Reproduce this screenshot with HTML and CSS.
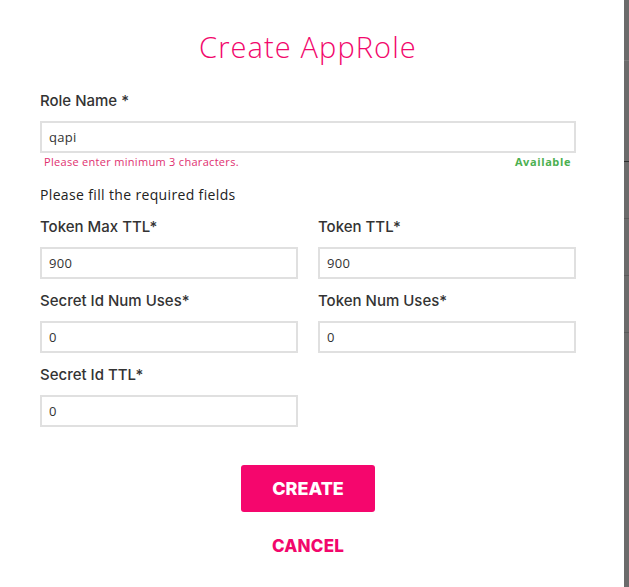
FILE: index.html
```html
<!DOCTYPE html>
<html lang="en">
<head>
<meta charset="utf-8">
<title>Create AppRole</title>
<link rel="stylesheet" href="styles.css">
</head>
<body>
<div class="screen">
  <div class="modal">
    <h1 class="title">Create AppRole</h1>
    <label class="label label-role">Role Name *</label>
    <div class="input"><span class="value">qapi</span></div>
    <div class="hint-row">
      <span class="error">Please enter minimum 3 characters.</span>
      <span class="available">Available</span>
    </div>
    <p class="note">Please fill the required fields</p>
    <div class="grid">
      <div class="field">
        <label class="label">Token Max TTL*</label>
        <div class="input"><span class="value">900</span></div>
      </div>
      <div class="field">
        <label class="label">Token TTL*</label>
        <div class="input"><span class="value">900</span></div>
      </div>
      <div class="field">
        <label class="label">Secret Id Num Uses*</label>
        <div class="input"><span class="value">0</span></div>
      </div>
      <div class="field">
        <label class="label">Token Num Uses*</label>
        <div class="input"><span class="value">0</span></div>
      </div>
      <div class="field">
        <label class="label">Secret Id TTL*</label>
        <div class="input"><span class="value">0</span></div>
      </div>
    </div>
    <div class="actions">
      <button class="btn-create">CREATE</button>
      <button class="btn-cancel">CANCEL</button>
    </div>
  </div>
  <div class="backdrop">
    <div class="bd-seg s1"></div>
    <div class="bd-seg s2"></div>
    <div class="bd-seg s3"></div>
    <div class="bd-seg s4"></div>
    <div class="bd-seg s5"></div>
    <div class="bd-seg s6"></div>
  </div>
</div>
</body>
</html>
```
FILE: styles.css
```css
html, body {
  margin: 0;
  padding: 0;
  background: #ffffff;
}
body {
  font-family: "Open Sans", "Noto Sans", sans-serif;
  color: #2b2b2b;
}
.screen {
  display: flex;
  width: 629px;
  height: 587px;
  overflow: hidden;
}
.modal {
  width: 624px;
  flex: none;
  box-sizing: border-box;
  padding: 30px 48px 0 40px;
  background: #fff;
  display: flex;
  flex-direction: column;
}
.title {
  margin: 0;
  font-size: 29px;
  line-height: 34px;
  font-weight: 300;
  letter-spacing: 1.1px;
  color: #f2076c;
  text-align: center;
}
.label {
  display: block;
  font-family: Inter, "Open Sans", sans-serif;
  font-size: 15px;
  line-height: 20px;
  padding-top: 1px;
  font-weight: 500;
  letter-spacing: 0;
  color: #333;
}
.label-role {
  margin-top: 26px;
}
.input {
  margin-top: 10px;
  height: 32px;
  box-sizing: border-box;
  border: 2px solid #e0e0e0;
  padding-left: 7px;
  display: flex;
  align-items: center;
  font-size: 13px;
  letter-spacing: 0.3px;
  color: #333;
}
.hint-row {
  margin-top: 2px;
  display: flex;
  justify-content: space-between;
  line-height: 14px;
  font-size: 11px;
  padding: 0 5px 0 4px;
}
.error {
  color: #e0306f;
  letter-spacing: 0.3px;
}
.available {
  color: #4cb050;
  font-weight: 700;
  letter-spacing: 0.6px;
}
.note {
  margin: 16px 0 0;
  font-size: 14px;
  line-height: 20px;
  letter-spacing: 0.35px;
  color: #222;
}
.grid {
  display: grid;
  grid-template-columns: 1fr 1fr;
  column-gap: 20px;
  row-gap: 11px;
  margin-top: 11px;
}
.actions {
  display: flex;
  flex-direction: column;
  align-items: center;
  margin-top: 38px;
}
.btn-create {
  width: 134px;
  height: 47px;
  border: none;
  border-radius: 3px;
  background: #f5066d;
  color: #fff;
  font-family: Inter, "Open Sans", sans-serif;
  font-size: 18px;
  font-weight: 800;
  letter-spacing: 0;
  padding: 0;
}
.btn-cancel {
  margin-top: 24px;
  border: none;
  background: none;
  padding: 0;
  font-family: Inter, "Open Sans", sans-serif;
  font-size: 17px;
  line-height: 20px;
  font-weight: 800;
  letter-spacing: 0.2px;
  color: #f2076c;
}
.backdrop {
  flex: 1;
  display: flex;
  flex-direction: column;
  background: #6b6b6b;
}
.bd-seg {
  border-bottom: 1px solid #5a5a5a;
}
.s1 { height: 60px; border-bottom-color: #7a7a7a; }
.s2 { height: 100px; border-bottom-color: #2e2e2e; }
.s3 { height: 56px; }
.s4 { height: 56px; }
.s5 { height: 56px; }
.s6 { flex: 1; border-bottom: none; }
```
